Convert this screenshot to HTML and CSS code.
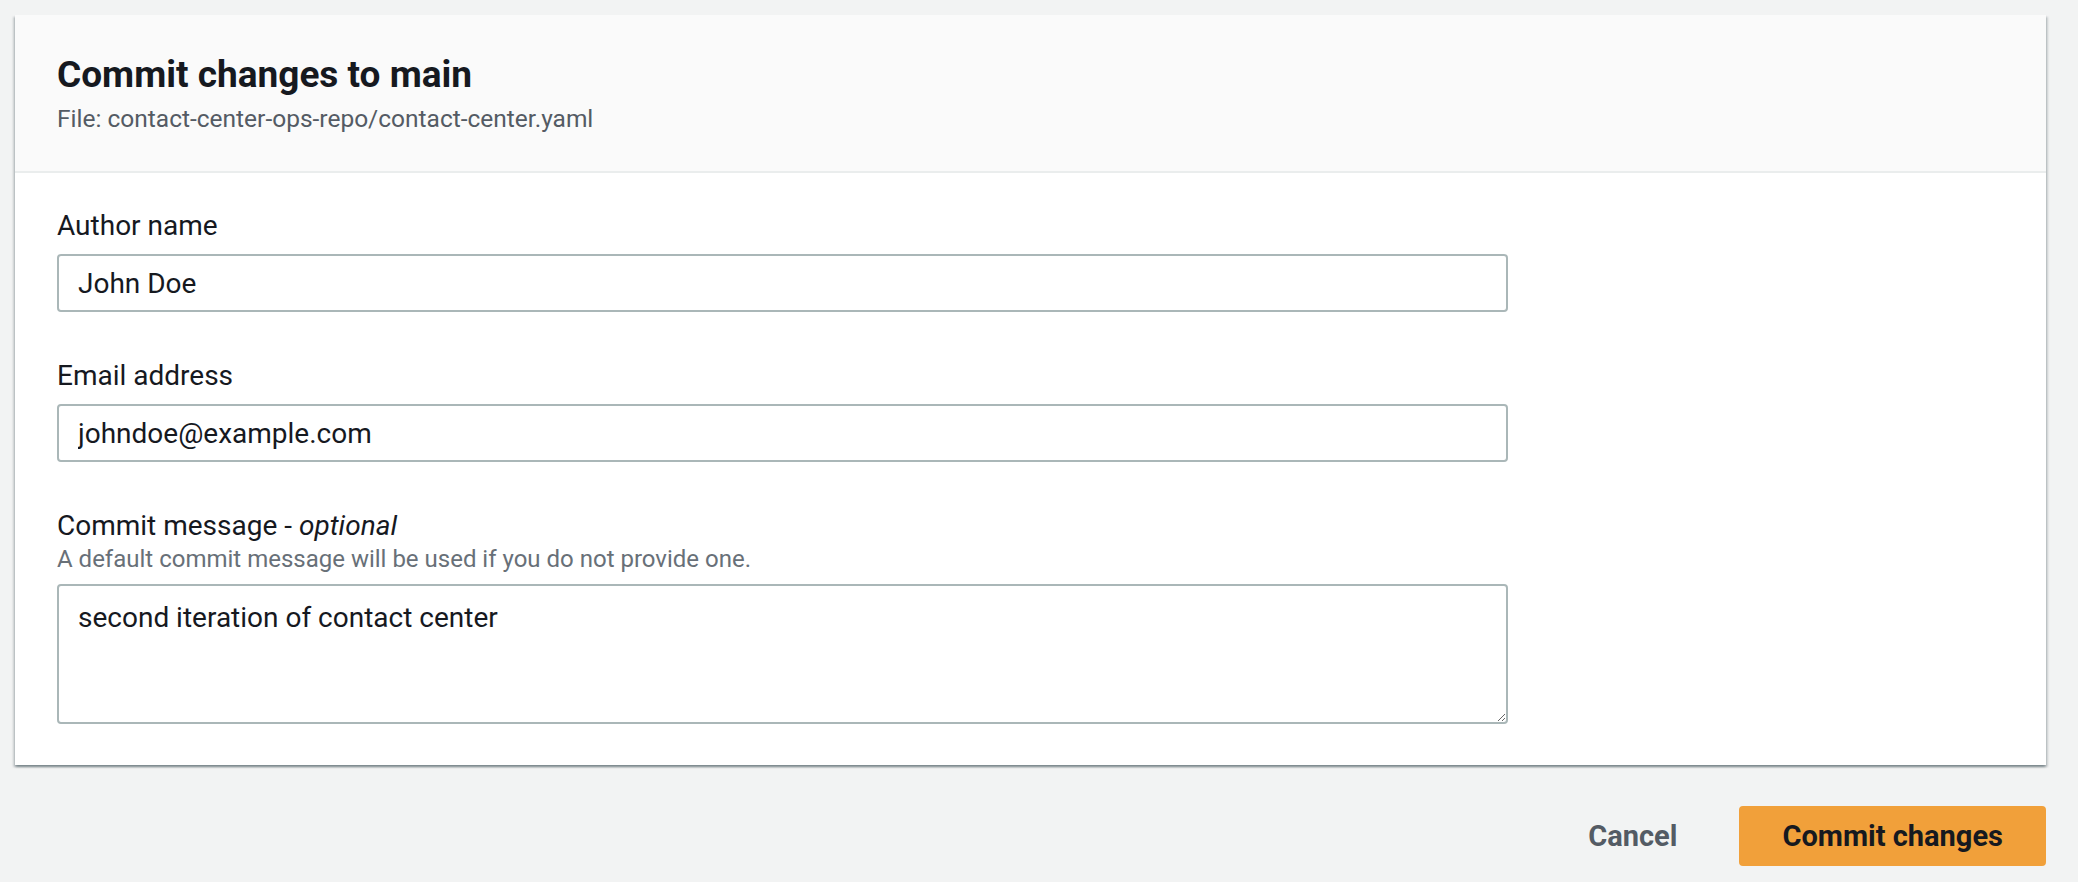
FILE: index.html
```html
<!DOCTYPE html>
<html lang="en">
<head>
<meta charset="utf-8">
<title>Commit changes to main</title>
<link rel="stylesheet" href="styles.css">
</head>
<body>
<div class="page">
  <div class="card">
    <div class="card-header">
      <h2 class="title">Commit changes to main</h2>
      <div class="desc">File: contact-center-ops-repo/contact-center.yaml</div>
    </div>
    <div class="card-body">
      <div class="field">
        <label class="label" for="author">Author name</label>
        <input class="input" id="author" type="text" value="John Doe">
      </div>
      <div class="field">
        <label class="label" for="email">Email address</label>
        <input class="input" id="email" type="text" value="johndoe@example.com">
      </div>
      <div class="field">
        <label class="label" for="msg">Commit message - <i>optional</i></label>
        <div class="hint">A default commit message will be used if you do not provide one.</div>
        <textarea class="textarea" id="msg">second iteration of contact center</textarea>
      </div>
    </div>
  </div>
  <div class="actions">
    <button class="btn-link" type="button">Cancel</button>
    <button class="btn-primary" type="button">Commit changes</button>
  </div>
</div>
</body>
</html>
```

FILE: styles.css
```css
html, body {
  margin: 0;
  padding: 0;
  background: #f2f3f3;
  font-family: Roboto, "Liberation Sans", Arial, sans-serif;
  color: #16191f;
}

.page {
  padding: 15px 32px 0 15px;
}

.card {
  background: #ffffff;
  box-shadow: 0 2px 2px 0 rgba(0, 28, 36, 0.3), 2px 2px 2px 0 rgba(0, 28, 36, 0.15), -2px 2px 2px 0 rgba(0, 28, 36, 0.15);
}

.card-header {
  background: #fafafa;
  padding: 38px 42px 34px;
  border-bottom: 2px solid #eaeded;
}

.title {
  margin: 0;
  font-size: 37px;
  line-height: 44px;
  font-weight: 700;
  color: #16191f;
}

.desc {
  margin-top: 4px;
  font-size: 24.5px;
  line-height: 36px;
  color: #545b64;
}

.card-body {
  padding: 30px 42px 41px;
}

.field + .field {
  margin-top: 41px;
}

.label {
  display: block;
  font-size: 28px;
  line-height: 34px;
  padding-top: 6px;
  color: #16191f;
}

.label i {
  font-style: italic;
}

.hint {
  font-size: 24px;
  line-height: 32px;
  color: #687078;
}

.input,
.textarea {
  display: block;
  box-sizing: border-box;
  width: 1451px;
  margin: 11px 0 0;
  border: 2px solid #aab7b8;
  border-radius: 4px;
  background: #ffffff;
  font-family: Roboto, "Liberation Sans", Arial, sans-serif;
  font-size: 28px;
  line-height: 40px;
  color: #16191f;
  outline: none;
}

.input {
  height: 58px;
  padding: 1px 19px 0;
}

.textarea {
  height: 140px;
  margin-top: 9px;
  padding: 12px 19px 8px;
  resize: vertical;
}

.actions {
  display: flex;
  justify-content: flex-end;
  align-items: center;
  margin-top: 41px;
}

.btn-link,
.btn-primary {
  font-family: Roboto, "Liberation Sans", Arial, sans-serif;
  font-size: 29px;
  font-weight: 700;
  height: 60px;
  border-radius: 4px;
  cursor: pointer;
}

.btn-link {
  background: transparent;
  border: 2px solid transparent;
  color: #545b64;
  padding: 0 38px;
  margin-right: 22px;
}

.btn-primary {
  background: #f1a03a;
  border: 2px solid #f1a03a;
  color: #16191f;
  padding: 0 41px;
}
```
